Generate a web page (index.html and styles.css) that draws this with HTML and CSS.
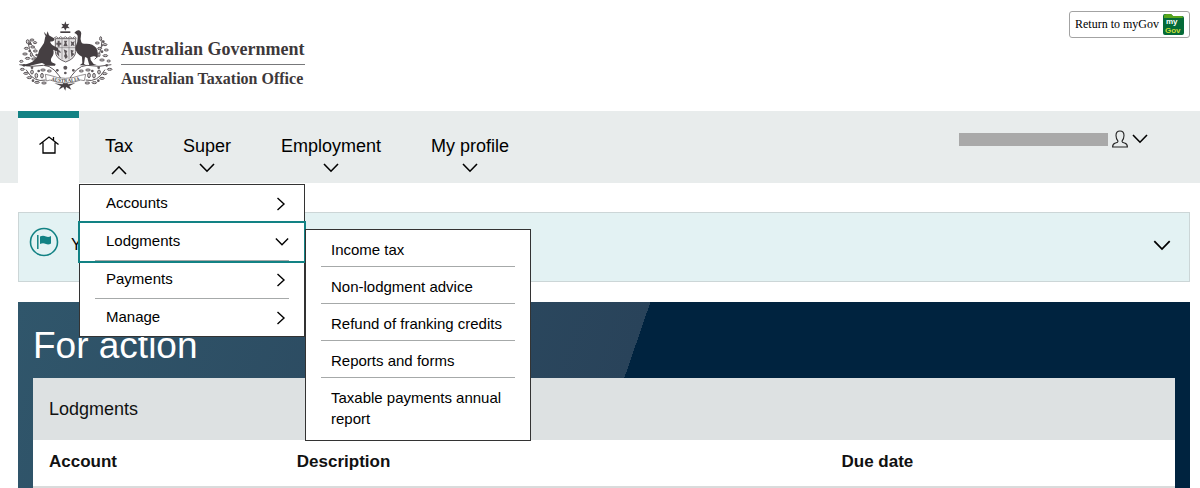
FILE: index.html
```html
<!DOCTYPE html>
<html lang="en">
<head>
  <meta charset="UTF-8" />
  <meta name="viewport" content="width=device-width, initial-scale=1.0" />
  <title>Australian Taxation Office</title>
  <link rel="stylesheet" href="styles.css">
</head>
<body>
  <!-- Shared icons -->
  <svg class="sprite" aria-hidden="true">
    <symbol id="chevron" viewBox="0 0 16 10">
      <path d="M1 1 L8 8.2 L15 1" fill="none" stroke="currentColor" stroke-width="1.6"/>
    </symbol>
    <symbol id="chevron-right" viewBox="0 0 10 14">
      <path d="M1.5 1 L8 7 L1.5 13" fill="none" stroke="currentColor" stroke-width="1.4"/>
    </symbol>
  </svg>

  <header class="header">
    <div class="brand">
      <svg class="crest" viewBox="24 18 288 210" role="img" aria-label="Coat of arms">
        <!-- stems -->
        <g fill="none" stroke="#5d575a" stroke-width="3">
          <path d="M28 149 Q65 158 101 151 Q134 151 162 207"/>
          <path d="M304 149 Q266 158 231 151 Q198 151 170 207"/>
          <path d="M107 195 Q72 204 48 164"/>
          <path d="M227 195 Q262 204 285 164"/>
          <path d="M83 132 Q61 124 54 82"/>
          <path d="M254 133 Q274 120 276 75"/>
          <path d="M77 102 Q62 91 59 77M263 105Q276 98 280 87"/>
        </g>
        <!-- wattle leaves -->
        <g fill="#d3d0d1" stroke="#5d575a" stroke-width="3">
          <ellipse cx="53" cy="80" rx="4" ry="6"/>
          <ellipse cx="66" cy="75" rx="6" ry="3"/>
          <ellipse cx="75" cy="83" rx="5" ry="3"/>
          <ellipse cx="49" cy="100" rx="6" ry="3"/>
          <ellipse cx="68" cy="96" rx="6" ry="3"/>
          <ellipse cx="76" cy="108" rx="6" ry="3"/>
          <ellipse cx="45" cy="117" rx="7" ry="3"/>
          <ellipse cx="64" cy="119" rx="3" ry="6"/>
          <ellipse cx="53" cy="130" rx="7" ry="3"/>
          <ellipse cx="71" cy="132" rx="6" ry="3"/>
          <ellipse cx="34" cy="139" rx="5" ry="3"/>
          <ellipse cx="37" cy="163" rx="6" ry="3"/>
          <ellipse cx="48" cy="175" rx="7" ry="3"/>
          <ellipse cx="66" cy="171" rx="4" ry="6"/>
          <ellipse cx="58" cy="188" rx="7" ry="3"/>
          <ellipse cx="79" cy="182" rx="4" ry="7"/>
          <ellipse cx="81" cy="202" rx="7" ry="3"/>
          <ellipse cx="96" cy="182" rx="4" ry="7"/>
          <ellipse cx="102" cy="204" rx="7" ry="3"/>
          <ellipse cx="99" cy="165" rx="7" ry="3"/>
          <ellipse cx="118" cy="168" rx="6" ry="3"/>
          <ellipse cx="272" cy="71" rx="3" ry="6"/>
          <ellipse cx="262" cy="84" rx="6" ry="3"/>
          <ellipse cx="285" cy="89" rx="6" ry="3"/>
          <ellipse cx="269" cy="100" rx="6" ry="3"/>
          <ellipse cx="289" cy="105" rx="6" ry="3"/>
          <ellipse cx="267" cy="119" rx="3" ry="6"/>
          <ellipse cx="286" cy="122" rx="7" ry="3"/>
          <ellipse cx="276" cy="135" rx="7" ry="3"/>
          <ellipse cx="296" cy="138" rx="5" ry="3"/>
          <ellipse cx="299" cy="163" rx="7" ry="3"/>
          <ellipse cx="284" cy="176" rx="7" ry="3"/>
          <ellipse cx="267" cy="171" rx="4" ry="6"/>
          <ellipse cx="276" cy="190" rx="7" ry="3"/>
          <ellipse cx="252" cy="182" rx="4" ry="7"/>
          <ellipse cx="253" cy="203" rx="7" ry="3"/>
          <ellipse cx="237" cy="181" rx="4" ry="7"/>
          <ellipse cx="232" cy="204" rx="7" ry="3"/>
          <ellipse cx="234" cy="165" rx="7" ry="3"/>
          <ellipse cx="214" cy="168" rx="6" ry="3"/>
        </g>
        <g fill="#5d575a">
          <circle cx="60" cy="86" r="4"/><circle cx="59" cy="108" r="4"/><circle cx="80" cy="120" r="4"/>
          <circle cx="42" cy="151" r="4"/><circle cx="66" cy="158" r="4"/><circle cx="86" cy="168" r="4"/>
          <circle cx="69" cy="197" r="4"/><circle cx="276" cy="110" r="4"/><circle cx="280" cy="80" r="4"/>
          <circle cx="290" cy="151" r="4"/><circle cx="266" cy="158" r="4"/><circle cx="247" cy="168" r="4"/>
          <circle cx="265" cy="197" r="4"/><circle cx="142" cy="166" r="4"/><circle cx="190" cy="166" r="4"/>
          <circle cx="166" cy="158" r="6"/><circle cx="166" cy="174" r="4"/>
        </g>
        <!-- shield -->
        <path d="M136 71 H197 V110 Q196 131 167 141 Q137 131 136 110Z" fill="#e4e2e3" stroke="#6a6467" stroke-width="3"/>
        <path d="M136 98H197M156 72V133M177 72V133" stroke="#817b7e" stroke-width="2"/>
        <g fill="#5b5558">
          <path d="M143 77h6v6h5v6h-5v6h-6v-6h-4v-6h4z"/>
          <path d="M162 77h10l-3 6 4 11h-13l4-10z"/>
          <path d="M182 78l6 4 6-4-3 9 3 7-6-3-6 3 2-8z"/>
          <path d="M141 104l9 3 3 7-7-2 2 13-8-9z"/>
          <path d="M161 103l11 5-3 7 4 11-6 6-5-9 3-6z"/>
          <path d="M182 104l10 3-5 5 6 6-9 8z"/>
        </g>
        <path d="M131 70l8-5 6 5 7-5 7 5 7-5 7 5 7-5 7 5 7-5 6 5" fill="none" stroke="#777174" stroke-width="3"/>
        <g fill="#453f42">
          <!-- star and wreath -->
          <path d="M166 19 L169 28 L178 26 L173 33 L179 40 L170 39 L166 47 L162 39 L153 40 L159 33 L154 26 L163 28Z"/>
          <path d="M151 49h30v5h-30z"/>
          <!-- kangaroo -->
          <path d="M103 50 L109 60 L113 49 L117 61 Q124 66 132 70 Q136 75 129 79 L120 80 Q123 87 128 91 L144 100 L146 107 L137 108 L130 104 Q133 117 126 126 Q120 133 125 142 L137 147 L135 152 L106 152 Q104 146 96 144 Q82 146 66 151 Q48 157 32 149 Q52 149 67 140 Q81 131 84 118 Q87 102 96 93 Q104 83 104 74 Q105 67 107 63 Q102 58 103 50Z"/>
          <!-- emu -->
          <path d="M193 54 Q199 44 207 46 Q216 50 213 61 Q210 72 214 82 Q218 88 227 86 Q248 85 259 99 Q266 112 262 128 Q256 122 250 124 Q245 126 241 126 L242 135 L251 147 L260 150 L238 151 L232 129 L225 126 L222 147 L229 151 L209 151 L217 145 L216 125 Q197 115 196 98 Q204 81 203 66 Q204 58 193 54Z"/>
          <!-- knots of the base -->
          <path d="M133 205 L157 208 L166 201 L175 208 L196 204 L178 213 L184 224 L168 216 L166 227 L160 216 L146 224 L153 213Z"/>
        </g>
        <!-- scroll -->
        <path d="M106 178 L120 181 Q166 199 212 181 L227 178 L223 197 L212 195 Q166 214 120 195 L109 198Z" fill="#fff" stroke="#5d575a" stroke-width="2"/>
        <path id="scroll" d="M112 192 Q166 212 221 192" fill="none"/>
        <text class="crest-text"><textPath href="#scroll" startOffset="50%">AUSTRALIA</textPath></text>
      </svg>
      <div class="brand-text">
        <span class="brand-gov">Australian Government</span>
        <span class="brand-ato">Australian Taxation Office</span>
      </div>
    </div>
    <button class="mygov" type="button">
      Return to myGov
      <svg class="mygov-icon" viewBox="0 0 21 21" aria-hidden="true">
        <path d="M0 2 Q0 0 2 0 H8 L10 2 H19 Q21 2 21 4 V19 Q21 21 19 21 H2 Q0 21 0 19Z" fill="#046a38"/>
        <path d="M1 1 Q4 -1 8 0 L10 2 H19 L20 4 H1Z" fill="#58a51c"/>
        <text x="3" y="10" fill="#fff">my</text>
        <text x="2" y="19" fill="#c4dc35">Gov</text>
      </svg>
    </button>
  </header>

  <nav class="nav">
    <ul class="nav-list">
      <li class="nav-home">
        <a href="#" aria-label="Home">
          <svg class="home-icon" viewBox="0 0 20 18" fill="none" stroke="#000" stroke-width="1.3">
            <path d="M0.5 8.5 L10 1 L19.500 8.500M4 6.500V17H16V6.500M14.500 4.200V1"/>
          </svg>
        </a>
      </li>
      <li class="nav-item open">
        <button type="button" aria-expanded="true">Tax <svg class="chevron"><use href="#chevron"/></svg></button>
        <ul class="menu">
          <li><button type="button">Accounts <svg class="arrow"><use href="#chevron-right"/></svg></button></li>
          <li class="selected">
            <button type="button" aria-expanded="true">Lodgments <svg class="chevron"><use href="#chevron"/></svg></button>
            <ul class="submenu">
              <li><a href="#">Income tax</a></li>
              <li><a href="#">Non-lodgment advice</a></li>
              <li><a href="#">Refund of franking credits</a></li>
              <li><a href="#">Reports and forms</a></li>
              <li><a href="#">Taxable payments annual report</a></li>
            </ul>
          </li>
          <li><button type="button">Payments <svg class="arrow"><use href="#chevron-right"/></svg></button></li>
          <li><button type="button">Manage <svg class="arrow"><use href="#chevron-right"/></svg></button></li>
        </ul>
      </li>
      <li class="nav-item"><button type="button">Super <svg class="chevron"><use href="#chevron"/></svg></button></li>
      <li class="nav-item"><button type="button">Employment <svg class="chevron"><use href="#chevron"/></svg></button></li>
      <li class="nav-item"><button type="button">My profile <svg class="chevron"><use href="#chevron"/></svg></button></li>
    </ul>
    <button class="user" type="button" aria-label="Account options">
      <span class="user-name"></span>
      <svg class="user-icon" viewBox="0 0 16 18" fill="none" stroke="#222" stroke-width="1.1">
        <path d="M6 11.200 Q4 9 4 5.500 Q4 1 8 1 Q12 1 12 5.500 Q12 9 10 11.200 Q10 12.500 12.500 13 Q15.400 13.700 15.400 17 H0.600 Q0.600 13.700 3.500 13 Q6 12.500 6 11.200Z"/>
      </svg>
      <svg class="chevron"><use href="#chevron"/></svg>
    </button>
  </nav>

  <main class="main">
    <button class="notice" type="button">
      <svg class="flag-icon" viewBox="0 0 30 30">
        <circle cx="15" cy="15" r="13.500" fill="none" stroke="#128284" stroke-width="1.600"/>
        <path d="M8.800 8V22" stroke="#128284" stroke-width="1.500"/>
        <path d="M11 9.500 Q14 8 17 9.500 Q19.500 10.500 22 9 V16.500 Q19.500 18 17 17 Q14 15.500 11 17Z" fill="#128284"/>
      </svg>
      <span>You</span>
      <svg class="chevron"><use href="#chevron"/></svg>
    </button>

    <section class="action">
      <h1>For action</h1>
      <div class="card">
        <h2>Lodgments</h2>
        <table>
          <thead>
            <tr>
              <th class="col-account">Account</th>
              <th class="col-description">Description</th>
              <th>Due date</th>
            </tr>
          </thead>
        </table>
      </div>
    </section>
  </main>
</body>
</html>
```
FILE: styles.css
```css
:root {
  --teal: #128284;
  --navy: #00233f;
  --grey: #e8ecec;
  --line: #a6a9a9;
}
* {
  box-sizing: border-box;
}
body {
  margin: 0;
  font-family: "Liberation Sans", Arial, sans-serif;
  background: #fff;
  color: #000;
}
ul {
  list-style: none;
  margin: 0;
  padding: 0;
}
button {
  border: none;
  background: none;
  padding: 0;
  font: inherit;
  color: inherit;
  cursor: pointer;
}
a {
  color: inherit;
  text-decoration: none;
}
svg {
  display: block;
  flex: none;
}
.sprite {
  display: none;
}
.chevron {
  width: 16px;
  height: 10px;
}
.arrow {
  width: 10px;
  height: 14px;
}

/* Header */
.header {
  display: flex;
  justify-content: space-between;
  align-items: flex-start;
  padding: 11px 10px 20px 18px;
}
.brand {
  display: flex;
  gap: 7px;
  padding-top: 10px;
}
.crest {
  width: 96px;
  height: 70px;
}
.crest-text {
  font: bold 15px "Liberation Serif", serif;
  fill: #453f42;
  text-anchor: middle;
}
.brand-text {
  display: flex;
  flex-direction: column;
  padding-top: 16px;
  font-family: "Liberation Serif", "Times New Roman", serif;
  font-weight: bold;
  color: #3d383a;
}
.brand-gov {
  font-size: 18px;
  line-height: 24px;
  padding-bottom: 3px;
  border-bottom: 1px solid #77787a;
}
.brand-ato {
  font-size: 16px;
  line-height: 20px;
  padding-top: 4px;
}
.mygov {
  display: flex;
  align-items: center;
  gap: 4px;
  height: 27px;
  padding: 0 5px;
  border: 1px solid #a3a3a3;
  border-radius: 3px;
  background: #fff;
  font: 12px "Liberation Serif", "Times New Roman", serif;
}
.mygov-icon {
  width: 21px;
  height: 21px;
}
.mygov-icon text {
  font: bold 8px "Liberation Sans", Arial, sans-serif;
}

/* Main navigation */
.nav {
  display: flex;
  justify-content: space-between;
  padding: 0 52px 0 18px;
  background: var(--grey);
}
.nav-list {
  display: flex;
  height: 72px;
}
.nav-home {
  width: 61px;
  border-top: 7px solid var(--teal);
  background: #fff;
}
.nav-home a {
  display: flex;
  justify-content: center;
  padding-top: 18px;
}
.home-icon {
  width: 20px;
  height: 18px;
}
.nav-item {
  position: relative;
}
.nav-item > button {
  display: flex;
  flex-direction: column;
  align-items: center;
  gap: 7px;
  padding: 25px 25px 0;
  font-size: 18px;
  line-height: 20px;
}
.nav-item.open > button {
  gap: 9px;
  padding-left: 26px;
}
.nav-item.open > button .chevron {
  transform: rotate(180deg);
}
.menu,
.submenu {
  position: absolute;
  width: 226px;
  border: 1px solid #333;
  background: #fff;
  font-size: 15px;
}
.menu {
  z-index: 10;
  top: 73px;
  left: 0;
}
.menu > li {
  position: relative;
  padding: 0 15px;
}
.menu > li > button {
  display: flex;
  justify-content: space-between;
  align-items: center;
  width: 100%;
  height: 38px;
  padding: 0 0 2px 11px;
  border-bottom: 1px solid var(--line);
}
.menu > li:last-child > button {
  height: 37px;
  border-bottom: none;
}
.menu > li > button .arrow {
  margin: 2px 3px 0 0;
}
.menu > li > button .chevron {
  width: 14px;
  margin-top: 2px;
}
.menu > .selected {
  outline: 2px solid var(--teal);
  z-index: 1;
}
.submenu {
  top: 6px;
  left: 225px;
  padding: 0 15px 5px;
}
.submenu li {
  padding: 9px 10px 6px;
  line-height: 21px;
  border-bottom: 1px solid var(--line);
}
.submenu li:last-child {
  border-bottom: none;
}

/* Signed in user */
.user {
  display: flex;
  align-items: center;
  align-self: flex-start;
  gap: 4px;
  padding-top: 19px;
}
.user-name {
  width: 149px;
  height: 13px;
  background: #a9a9a9;
}
.user-icon {
  width: 16px;
  height: 18px;
}

/* Page content */
.main {
  padding: 29px 10px 0 18px;
}
.notice {
  display: flex;
  align-items: center;
  gap: 12px;
  width: 100%;
  height: 70px;
  padding: 0 18px 4px 10px;
  border: 1px solid #ccd6d7;
  background: #e3f2f3;
  font-size: 16px;
}
.flag-icon {
  width: 30px;
  height: 30px;
  margin-bottom: 6px;
}
.notice .chevron {
  width: 18px;
  height: 11px;
  margin-left: auto;
}
.action {
  margin-top: 20px;
  padding: 0 15px;
  background: linear-gradient(109deg, #30566b 0, #29435a 598px, var(--navy) 598px);
}
.action h1 {
  margin: 0;
  padding: 23px 0 11px;
  font-size: 37px;
  line-height: 42px;
  font-weight: normal;
  color: #fff;
}
.card {
  background: #fff;
}
.card h2 {
  margin: 0;
  padding: 20px 16px;
  background: #dde1e2;
  font-size: 18px;
  line-height: 22px;
  font-weight: normal;
  color: #111;
}
table {
  width: 100%;
  border-collapse: collapse;
  table-layout: fixed;
}
th {
  height: 47px;
  padding: 0 16px 3px;
  border-bottom: 2px solid #d9dbdb;
  font-size: 17px;
  text-align: left;
  color: #111;
}
.col-account {
  width: 21.7%;
}
.col-description {
  width: 47.7%;
}
```
